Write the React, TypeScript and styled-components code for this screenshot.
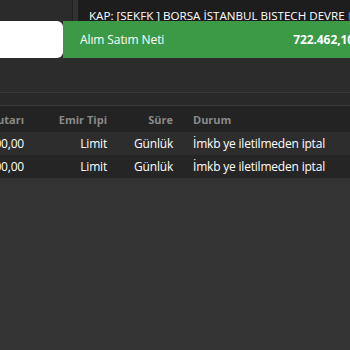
import React from "react";
import styled, { createGlobalStyle } from "styled-components";

const Global = createGlobalStyle`
  html, body { margin: 0; padding: 0; background: #333333; }
  body { font-family: "Open Sans", "Noto Sans", sans-serif; width: 350px; height: 350px; overflow: hidden; }
`;

const Page = styled.div`
  width: 350px;
  height: 350px;
  background: #333333;
  display: flex;
  flex-direction: column;
  overflow: hidden;
`;

const TopStrip = styled.div`
  display: flex;
  height: 21px;
  background: #2b2b2b;
`;

const TopLeft = styled.div`
  width: 72px;
  border-right: 1px solid #1f1f1f;
  background: #2b2b2b;
`;

const TopGap = styled.div`
  width: 5px;
  background: #323232;
`;

const Ticker = styled.div`
  flex: 1;
  box-sizing: border-box;
  height: 21px;
  background: #1d1d1d;
  color: #ffffff;
  font-size: 11.6px;
  line-height: 22px;
  padding: 5px 0 0 11px;
  white-space: nowrap;
  overflow: hidden;
`;

const TickerLink = styled.span`
  color: #3f8fd8;
`;

const NetRow = styled.div`
  display: flex;
  height: 37px;
  background: #2b2b2b;
  overflow: hidden;
`;

const WhiteBox = styled.div`
  width: 63px;
  flex-shrink: 0;
  background: #ffffff;
  border-radius: 0 6px 6px 0;
`;

const GreenBox = styled.div`
  flex-shrink: 0;
  width: 308px;
  background: #3c9a46;
  color: #ffffff;
  display: flex;
  align-items: center;
  padding: 0 17px;
  box-sizing: border-box;
  font-size: 12px;
  letter-spacing: -0.1px;
  white-space: nowrap;
`;

const NetValue = styled.span`
  margin-left: auto;
  font-weight: 700;
`;

const Spacer = styled.div`
  height: 34px;
  background: #2c2c2c;
  border-bottom: 1px solid #3a3a3a;
`;

const Band = styled.div`
  height: 12px;
  background: #292929;
  border-bottom: 1px solid #3b3b3b;
`;

const Grid = styled.div`
  display: grid;
  grid-template-columns: 34px 83px 66px 1fr;
`;

const Row = styled.div<{ $bg: string; $h: number }>`
  display: contents;
  & > div {
    background: ${(p) => p.$bg};
    height: ${(p) => p.$h}px;
  }
`;

const Cell = styled.div<{ $align: "left" | "right"; $head?: boolean }>`
  display: flex;
  align-items: center;
  justify-content: ${(p) => (p.$align === "right" ? "flex-end" : "flex-start")};
  padding: 0 10px;
  overflow: hidden;
  white-space: nowrap;
  color: ${(p) => (p.$head ? "#8a8a8a" : "#ffffff")};
  font-size: ${(p) => (p.$head ? "11px" : "12px")};
  letter-spacing: ${(p) => (p.$head ? "0" : "-0.2px")};
  font-weight: ${(p) => (p.$head ? 700 : 400)};
  min-width: 0;
`;

const rows = [
  { amount: "1.000,00", type: "Limit", dur: "Günlük", status: "İmkb ye iletilmeden iptal" },
  { amount: "1.000,00", type: "Limit", dur: "Günlük", status: "İmkb ye iletilmeden iptal" },
];

export default function App() {
  return (
    <Page>
      <Global />
      <TopStrip>
        <TopLeft />
        <TopGap />
        <Ticker>
          KAP: [SEKFK ] BORSA İSTANBUL BISTECH DEVRE <TickerLink>KESİCİ</TickerLink>
        </Ticker>
      </TopStrip>
      <NetRow>
        <WhiteBox />
        <GreenBox>
          <span>Alım Satım Neti</span>
          <NetValue>722.462,10</NetValue>
        </GreenBox>
      </NetRow>
      <Spacer />
      <Band />
      <Grid>
        <Row $bg="#232323" $h={26}>
          <Cell $align="right" $head>Emir Tutarı</Cell>
          <Cell $align="right" $head>Emir Tipi</Cell>
          <Cell $align="right" $head>Süre</Cell>
          <Cell $align="left" $head>Durum</Cell>
        </Row>
        {rows.map((r, i) => (
          <Row key={i} $bg={i % 2 === 0 ? "#2d2d2d" : "#252525"} $h={23}>
            <Cell $align="right">{r.amount}</Cell>
            <Cell $align="right">{r.type}</Cell>
            <Cell $align="right">{r.dur}</Cell>
            <Cell $align="left">{r.status}</Cell>
          </Row>
        ))}
      </Grid>
    </Page>
  );
}
